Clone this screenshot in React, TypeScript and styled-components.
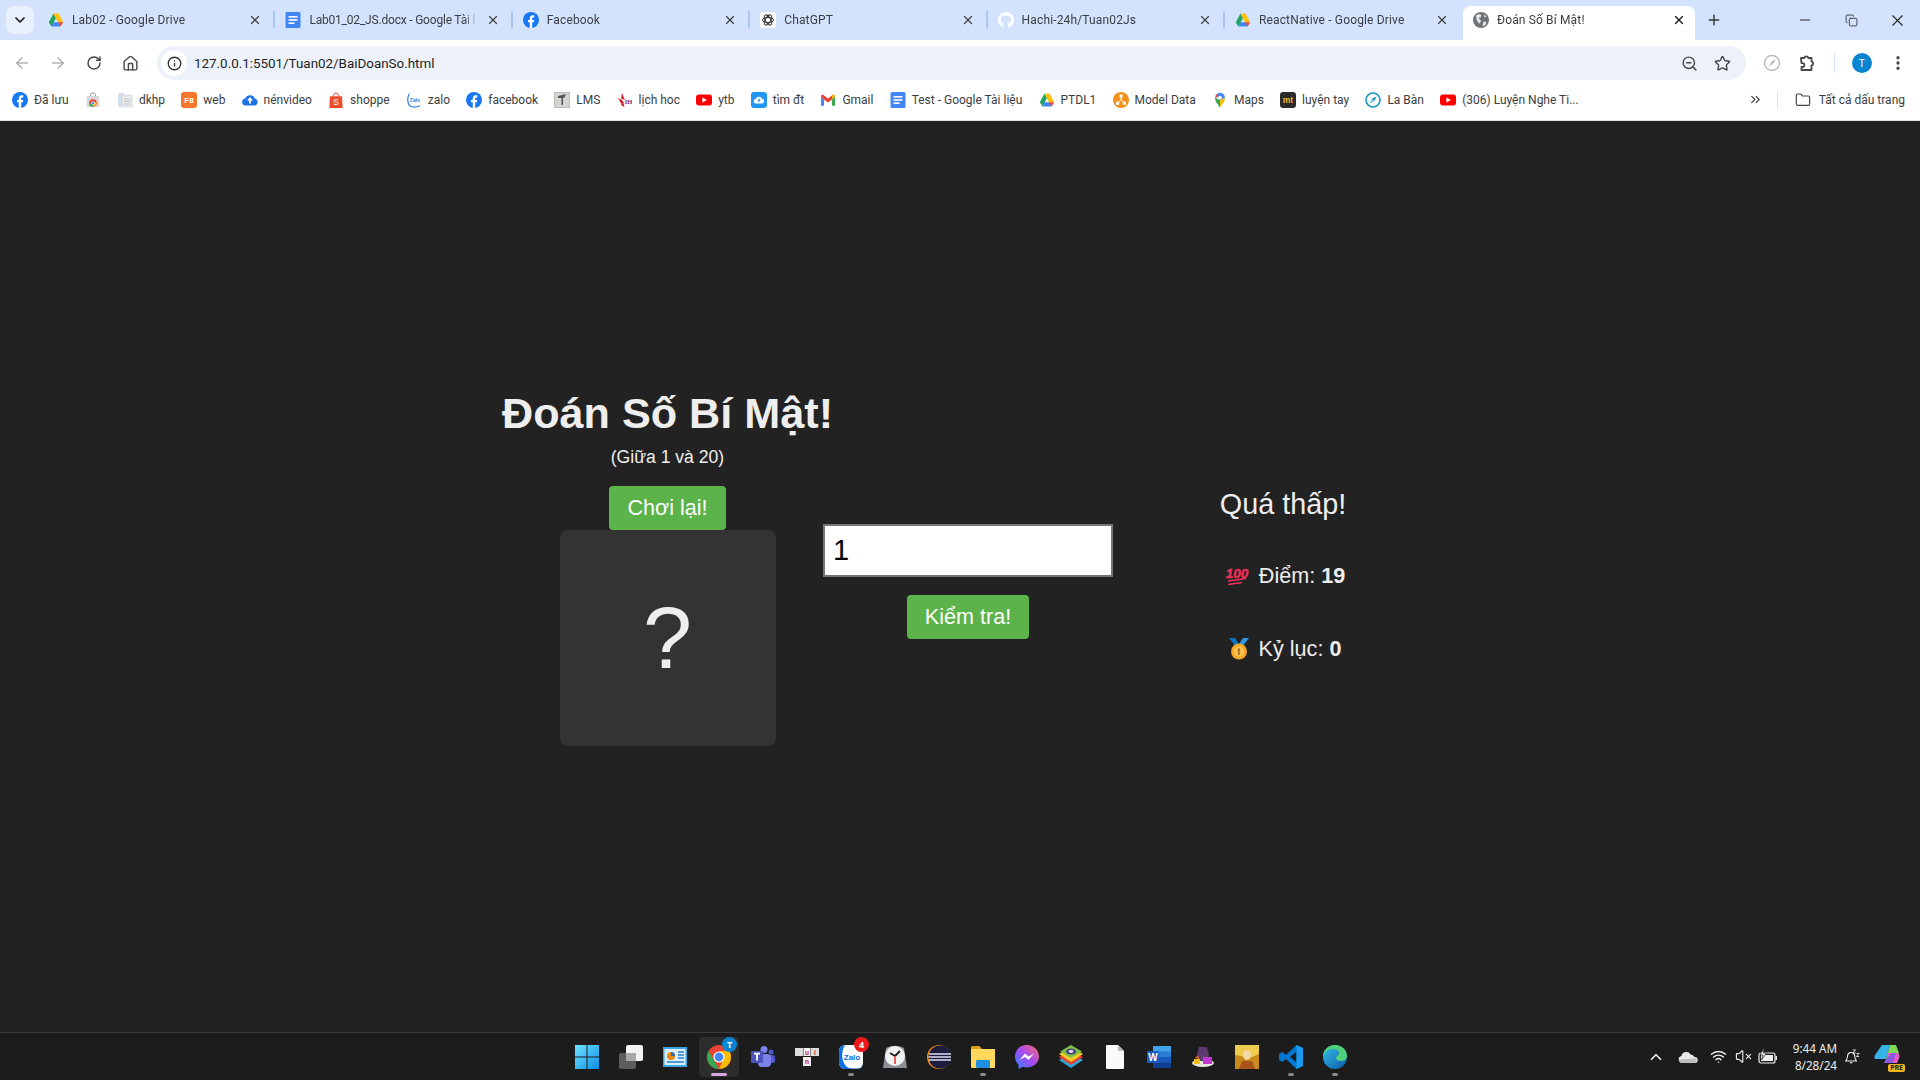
import React from 'react';
import styled, { createGlobalStyle } from 'styled-components';
import {
    ArrowLeft, ArrowRight, RotateCw, House, Info, ZoomOut, Star, EllipsisVertical,
    X, Plus, Minus, Copy, ChevronDown, ChevronsRight, ChevronUp, Folder, Wifi, VolumeX,
} from 'lucide-react';

const GlobalStyle = createGlobalStyle`
    html, body {
        margin: 0;
        padding: 0;
        height: 1080px;
        overflow: hidden;
        background: #222;
    }
    * { box-sizing: border-box; }
`;

// favicons and taskbar logos
const Drive = () => (
    <svg width="16" height="16" viewBox="0 0 16 16">
        <polygon points="5.4,1.5 8,6 3.4,14.5 0.8,10.2" fill="#1fa463" />
        <polygon points="5.4,1.5 10.6,1.5 15.2,10.2 10,10.2" fill="#ffc107" />
        <polygon points="5.4,10.2 10.4,10.2 12.6,14.5 3.4,14.5" fill="#4285f4" />
        <polygon points="10,10.2 15.2,10.2 12.6,14.5" fill="#ea4335" />
    </svg>
);
const Doc = () => (
    <svg width="16" height="16" viewBox="0 0 16 16">
        <rect x="0.5" y="0" width="15" height="16" rx="1.5" fill="#4285f4" />
        <rect x="3.5" y="4" width="9" height="1.6" fill="#fff" />
        <rect x="3.5" y="7.2" width="9" height="1.6" fill="#fff" />
        <rect x="3.5" y="10.4" width="6" height="1.6" fill="#fff" />
    </svg>
);
const Facebook = () => (
    <svg width="16" height="16" viewBox="0 0 16 16">
        <circle cx="8" cy="8" r="8" fill="#1877f2" />
        <path d="M6.8 16V10.3H5V8h1.8V6.3C6.8 4.4 7.9 3.3 9.7 3.3c.8 0 1.6.1 1.6.1v2h-.9c-.9 0-1.2.6-1.2 1.1V8h2l-.3 2.3H9.2V16z" fill="#fff" />
    </svg>
);
const Gpt = () => (
    <svg width="16" height="16" viewBox="0 0 16 16">
        <rect width="16" height="16" rx="3" fill="#fff" />
        <g fill="none" stroke="#333" strokeWidth="1">
            <ellipse cx="8" cy="8" rx="5.6" ry="2.6" />
            <ellipse cx="8" cy="8" rx="5.6" ry="2.6" transform="rotate(60 8 8)" />
            <ellipse cx="8" cy="8" rx="5.6" ry="2.6" transform="rotate(120 8 8)" />
        </g>
    </svg>
);
const Github = () => (
    <svg width="16" height="16" viewBox="0 0 16 16">
        <path fill="#fff" d="M8 0C3.6 0 0 3.6 0 8c0 3.5 2.3 6.5 5.5 7.6.4.1.5-.2.5-.4v-1.4c-2.2.5-2.7-1-2.7-1-.4-.9-.9-1.2-.9-1.2-.7-.5.1-.5.1-.5.8.1 1.2.8 1.2.8.7 1.2 1.9.9 2.3.7.1-.5.3-.9.5-1.1-1.8-.2-3.6-.9-3.6-4 0-.9.3-1.6.8-2.1-.1-.2-.4-1 .1-2.1 0 0 .7-.2 2.2.8.6-.2 1.3-.3 2-.3s1.4.1 2 .3c1.5-1 2.2-.8 2.2-.8.4 1.1.2 1.9.1 2.1.5.6.8 1.3.8 2.1 0 3.1-1.9 3.7-3.7 3.9.3.3.6.8.6 1.5v2.2c0 .2.1.5.6.4C13.7 14.5 16 11.5 16 8c0-4.4-3.6-8-8-8z" />
    </svg>
);
const Globe = () => (
    <svg width="16" height="16" viewBox="0 0 16 16">
        <circle cx="8" cy="8" r="8" fill="#6f7479" />
        <path d="M3 3.5l3-1.5 2.5 1-1 2.5-2 .5 2.5 2.5-1 3-1.5-.5L3.5 7.5zM10.5 9.5l3 .5-1.5 3.5-2.5 .5z M11 2.5l2.5 2-2 1z" fill="#e4e7ea" />
    </svg>
);
const Store = () => (
    <svg width="16" height="16" viewBox="0 0 16 16">
        <path d="M5.5 4V2.6C5.5 1.6 6.4 1 8 1s2.5.6 2.5 1.6V4" fill="none" stroke="#999" />
        <path d="M2 4h12l.6 11H1.4z" fill="#d8d8d8" />
        <circle cx="8" cy="11" r="3.8" fill="#ea4335" />
        <path d="M4.4 11.5A3.8 3.8 0 0 0 8 14.8l1.5-3z" fill="#34a853" />
        <path d="M8 14.8a3.8 3.8 0 0 0 3.6-4.6H8z" fill="#fbbc05" />
        <circle cx="8" cy="11" r="1.6" fill="#4285f4" stroke="#fff" strokeWidth=".6" />
    </svg>
);
const Page = () => (
    <svg width="16" height="16" viewBox="0 0 16 16">
        <rect x="1" y="1" width="6" height="14" fill="#cfe0ef" />
        <rect x="5" y="3" width="10" height="12" fill="#e7e9ec" stroke="#c9ced3" strokeWidth=".6" />
        <path d="M7 7h6M7 9.5h6M7 12h6" stroke="#c2c8ce" />
    </svg>
);
const F8 = () => (
    <svg width="16" height="16" viewBox="0 0 16 16">
        <rect width="16" height="16" rx="3" fill="#f6762a" />
        <text x="8" y="11" textAnchor="middle" fontFamily="Liberation Sans" fontWeight="700" fontSize="8" fill="#fff">F8</text>
    </svg>
);
const CloudUp = ({ color = '#1a73e8' }: { color?: string }) => (
    <svg width="16" height="16" viewBox="0 0 16 16">
        <path d="M4 13.5a3.5 3.5 0 0 1-.6-7A5 5 0 0 1 12.8 6.6 3.5 3.5 0 0 1 12.5 13.5z" fill={color} />
        <path d="M8 5l3 3.4H9v3H7v-3H5z" fill="#fff" />
    </svg>
);
const Shopee = () => (
    <svg width="16" height="16" viewBox="0 0 16 16">
        <path d="M5.2 4.5C5.2 2.4 6.4 1 8 1s2.8 1.4 2.8 3.5" fill="none" stroke="#ee4d2d" />
        <path d="M2 4.2h12l.7 11.8H1.3z" fill="#ee4d2d" />
        <text x="8" y="13" textAnchor="middle" fontFamily="Liberation Sans" fontSize="8.5" fill="#fff">S</text>
    </svg>
);
const ZaloBook = () => (
    <svg width="16" height="16" viewBox="0 0 16 16">
        <path d="M3.5 1.5C1 5 1 11 4 14c3 1.4 7 1.2 10-.2" fill="none" stroke="#2f7de1" strokeWidth="1.2" />
        <text x="9" y="9.6" textAnchor="middle" fontFamily="Liberation Sans" fontWeight="700" fontSize="5" fill="#2f7de1">Zalo</text>
    </svg>
);
const Lms = () => (
    <svg width="16" height="16" viewBox="0 0 16 16">
        <rect width="16" height="16" fill="#d4d4d2" stroke="#a9a9a9" />
        <path d="M4 4l8-2-1.5 3.5-1.5.5V13H7.5V6L4 6z" fill="#555" />
    </svg>
);
const Lotus = () => (
    <svg width="16" height="16" viewBox="0 0 16 16">
        <path d="M5 1l1.6 4L8 8 4 6.5zM1 6l4 2 2 3-3 .5zM6 9l1.5 6L4 13z" fill="#d6202a" />
        <text x="11.5" y="12" textAnchor="middle" fontFamily="Liberation Serif" fontWeight="700" fontSize="6.5" fill="#7c2b6f">IH</text>
    </svg>
);
const Youtube = () => (
    <svg width="16" height="16" viewBox="0 0 16 16">
        <rect y="2.5" width="16" height="11" rx="3" fill="#f00" />
        <polygon points="6.4,5.4 11,8 6.4,10.6" fill="#fff" />
    </svg>
);
const CloudTile = () => (
    <svg width="16" height="16" viewBox="0 0 16 16">
        <rect width="16" height="16" rx="3" fill="#2196f3" />
        <path d="M5 11.5a2.2 2.2 0 0 1-.2-4.4 3.3 3.3 0 0 1 6.3 0A2.2 2.2 0 0 1 11 11.5z" fill="#fff" />
        <path d="M8 6.6l1.6 2H8.6v1.4H7.4V8.6H6.4z" fill="#2196f3" />
    </svg>
);
const Gmail = () => (
    <svg width="16" height="16" viewBox="0 0 16 16">
        <path d="M1 4.5v9.2h3V7.4z" fill="#4285f4" />
        <path d="M12 7.4v6.3h3V4.5z" fill="#34a853" />
        <path d="M1 4.5C1 3 2.6 2.4 3.6 3.2L8 6.6l4.4-3.4C13.4 2.4 15 3 15 4.5L12 7.4 8 10.4 4 7.4z" fill="#ea4335" />
        <path d="M12 7.4V3.9l.4-.7C13.4 2.4 15 3 15 4.5z" fill="#fbbc05" />
    </svg>
);
const ModelData = () => (
    <svg width="16" height="16" viewBox="0 0 16 16">
        <circle cx="8" cy="8" r="8" fill="#f39019" />
        <path d="M8 4v3.5M8 7.5L4.8 11M8 7.5l3.2 3.5" stroke="#fff" />
        <rect x="6.4" y="2.6" width="3.2" height="3" fill="#fff" />
        <rect x="3" y="9.8" width="3.2" height="3" fill="#fff" />
        <rect x="9.8" y="9.8" width="3.2" height="3" fill="#fff" />
    </svg>
);
const Maps = () => (
    <svg width="16" height="16" viewBox="0 0 16 16">
        <path d="M8 16C6.6 12.4 3 10.4 3 5.6L8 8z" fill="#34a853" />
        <path d="M8 16c1.4-3.6 5-5.6 5-10.4L8 8z" fill="#fbbc05" />
        <path d="M3 5.6A5 5 0 0 1 6 1.2L8 5z" fill="#ea4335" />
        <path d="M6 1.2A5 5 0 0 1 13 5.6L8 8 6 5z" fill="#4285f4" />
        <circle cx="8" cy="5.6" r="1.8" fill="#fff" />
    </svg>
);
const Mt = () => (
    <svg width="16" height="16" viewBox="0 0 16 16">
        <rect width="16" height="16" rx="3" fill="#2a2a2a" />
        <text x="8" y="11" textAnchor="middle" fontFamily="Liberation Sans" fontWeight="700" fontSize="8.5" fill="#f2b71d">mt</text>
    </svg>
);
const Compass = () => (
    <svg width="16" height="16" viewBox="0 0 16 16">
        <circle cx="8" cy="8" r="7" fill="#fff" stroke="#1297c9" strokeWidth="1.6" />
        <polygon points="11.8,4.2 9.2,9.2 6.8,6.8" fill="#1297c9" />
        <polygon points="4.2,11.8 9.2,9.2 6.8,6.8" fill="#7ec8e3" />
    </svg>
);

const GrayCompass = () => (
    <svg width="18" height="18" viewBox="0 0 18 18">
        <circle cx="9" cy="9" r="7.5" fill="#fff" stroke="#b8bbbf" strokeWidth="1.4" />
        <polygon points="12.6,5.4 10,10 8,8" fill="#a8abb0" />
        <polygon points="5.4,12.6 10,10 8,8" fill="#c8cacd" />
    </svg>
);
const ExtensionPuzzle = () => (
    <svg width="18" height="18" viewBox="0 0 18 18" fill="none" stroke="#474747" strokeWidth="1.8" strokeLinejoin="round">
        <path d="M3 4h3.2a2.1 2.1 0 0 1 4.1 0h3.2v3.4a2.1 2.1 0 0 1 0 4.1V16H3.5v-3h1a1.9 1.9 0 0 0 0-3.8h-1z" />
    </svg>
);

const Hundred = () => (
    <svg width="24" height="24" viewBox="0 0 24 24">
        <text x="12" y="14" textAnchor="middle" fontFamily="Liberation Sans" fontWeight="700" fontStyle="italic" fontSize="13.5" fill="#f0325f" stroke="#f0325f" strokeWidth=".4">100</text>
        <path d="M3 17l18-2.5M3 20.5l14-2" stroke="#f0325f" strokeWidth="1.6" />
    </svg>
);
const Medal = () => (
    <svg width="20" height="24" viewBox="0 0 20 24">
        <path d="M0 1h6l4 6-3 3z" fill="#0d73c4" />
        <path d="M20 1h-6l-4 6 3 3z" fill="#2f95e0" />
        <circle cx="10" cy="14.5" r="8" fill="#f5a623" />
        <circle cx="10" cy="14.5" r="5.4" fill="#fbc04d" />
        <path d="M9 12l1.6-1v7H9.2v-4.6l-.8.4z" fill="#8a5a12" />
    </svg>
);

// taskbar
const StartLogo = () => (
    <svg width="24" height="24" viewBox="0 0 24 24">
        <defs>
            <linearGradient id="startGrad" x1="0" y1="0" x2="1" y2="1">
                <stop offset="0" stopColor="#6fe3ff" />
                <stop offset="1" stopColor="#0f8fe6" />
            </linearGradient>
        </defs>
        <path d="M0 0h11.5v11.5H0zM12.5 0H24v11.5H12.5zM0 12.5h11.5V24H0zM12.5 12.5H24V24H12.5z" fill="url(#startGrad)" />
    </svg>
);
const TaskView = () => (
    <svg width="24" height="24" viewBox="0 0 24 24">
        <rect x="0" y="8" width="17" height="16" rx="2" fill="#5d5d5d" />
        <rect x="7" y="0" width="17" height="16" rx="2" fill="#f3f3f3" />
        <rect x="7" y="8" width="10" height="8" fill="#a8a8a8" />
    </svg>
);
const Widgets = () => (
    <svg width="24" height="20" viewBox="0 0 24 20">
        <rect width="24" height="20" fill="#3ba7e4" />
        <rect x="1.5" y="2" width="21" height="16" fill="#d8effb" />
        <circle cx="8" cy="9" r="4" fill="#e88a1a" />
        <path d="M8 9V5a4 4 0 0 1 4 4z" fill="#2a6fb5" />
        <path d="M15 5h6M15 8h6M15 11h6M4 15h17" stroke="#2a7fc0" strokeWidth="1.4" />
    </svg>
);
const Chrome = () => (
    <svg width="24" height="24" viewBox="0 0 24 24">
        <circle cx="12" cy="12" r="12" fill="#ea4335" />
        <path d="M12 24A12 12 0 0 1 1.6 6l6 10.4z" fill="#34a853" />
        <path d="M12 24a12 12 0 0 0 10.4-18H12l4.4 8z" fill="#fbbc05" />
        <circle cx="12" cy="12" r="5.6" fill="#fff" />
        <circle cx="12" cy="12" r="4.4" fill="#4285f4" />
    </svg>
);
const Teams = () => (
    <svg width="24" height="24" viewBox="0 0 24 24">
        <circle cx="13" cy="4.5" r="3.5" fill="#7b83eb" />
        <circle cx="20" cy="7" r="2.5" fill="#5059c9" />
        <rect x="17" y="10" width="7" height="8" rx="2.5" fill="#5059c9" />
        <rect x="7" y="9" width="13" height="13" rx="4" fill="#7b83eb" />
        <rect x="0" y="6" width="12" height="12" rx="1.2" fill="#4b53bc" />
        <path d="M3 8.6h6M6 8.6v7" stroke="#fff" strokeWidth="1.8" />
    </svg>
);
const Unikey = () => (
    <svg width="24" height="20" viewBox="0 0 24 20" fontFamily="Liberation Sans" fontWeight="700" fontSize="6.5" textAnchor="middle">
        <rect x="0" y="1" width="8" height="8" fill="#ddd" />
        <rect x="8.5" y="1" width="7" height="8" fill="#f5f5f5" />
        <rect x="16" y="1" width="8" height="8" fill="#ddd" />
        <rect x="8" y="10" width="8" height="9" fill="#eee" />
        <text x="12" y="7.5" fill="#c22">u</text>
        <text x="20" y="7.5" fill="#c22">i</text>
        <text x="12" y="17" fill="#c22">n</text>
    </svg>
);
const Zalo = () => (
    <svg width="24" height="24" viewBox="0 0 24 24">
        <rect width="24" height="24" rx="6" fill="#fff" />
        <path d="M6 0C0 1 0 4 0 8v10c0 3 3 6 6 6h12c2 0 4-.6 6-2-6 2-12 2-16 0-6-5-6-16-2-22z" fill="#0a6fe8" />
        <text x="13" y="15" textAnchor="middle" fontFamily="Liberation Sans" fontWeight="700" fontSize="8" fill="#0a6fe8">Zalo</text>
    </svg>
);
const Clock = () => (
    <svg width="24" height="24" viewBox="0 0 24 24">
        <path d="M3 3c6-3 12-3 18 0l3 20H0z" fill="#8a9297" />
        <circle cx="12" cy="11" r="10" fill="#f1f1f1" />
        <path d="M12 11l5-5" stroke="#222" strokeWidth="2" />
        <path d="M12 11l-5-3" stroke="#222" strokeWidth="2" />
        <path d="M12 11v8" stroke="#d33" strokeWidth="1.5" />
    </svg>
);
const Eclipse = () => (
    <svg width="24" height="24" viewBox="0 0 24 24">
        <circle cx="12" cy="12" r="12" fill="#f7941e" />
        <circle cx="13" cy="12" r="11.5" fill="#1d1c3d" />
        <path d="M2 9h22M1.5 12h23M2 15h22" stroke="#dcdcf2" strokeWidth="1.6" />
    </svg>
);
const Explorer = () => (
    <svg width="24" height="24" viewBox="0 0 24 24">
        <path d="M0 2.5A1.5 1.5 0 0 1 1.5 1h7L11 4H0z" fill="#d9a016" />
        <path d="M0 4h24v18a1 1 0 0 1-1 1H1a1 1 0 0 1-1-1z" fill="#ffd85c" />
        <rect x="5" y="15" width="14" height="8" rx="1.5" fill="#1e90e0" />
    </svg>
);
const Messenger = () => (
    <svg width="24" height="24" viewBox="0 0 24 24">
        <defs>
            <linearGradient id="msgGrad" x1="0" y1="1" x2="1" y2="0">
                <stop offset="0" stopColor="#2f86ff" />
                <stop offset=".5" stopColor="#a24bf5" />
                <stop offset="1" stopColor="#ff6a6a" />
            </linearGradient>
        </defs>
        <path d="M12 0C5 0 0 5 0 11.5c0 3.4 1.4 6.3 3.6 8.3V24l4-2.2c1.4.4 2.8.6 4.4.6 7 0 12-5 12-10.9S19 0 12 0z" fill="url(#msgGrad)" />
        <path d="M4.5 15L10 8.5l3.5 3 5.5-3-5.5 6.5-3.5-3z" fill="#fff" />
    </svg>
);
const Bluestacks = () => (
    <svg width="24" height="24" viewBox="0 0 24 24">
        <path d="M0 15l12-7 12 7-12 8z" fill="#2aa6e0" />
        <path d="M0 12l12-7 12 7-12 8z" fill="#e8432e" />
        <path d="M0 9l12-7 12 7-12 8z" fill="#f7c926" />
        <path d="M1 6.5L12 0l11 6.5L12 13z" fill="#7dc242" />
        <ellipse cx="12" cy="6.5" rx="5" ry="3" fill="#4a3b8f" />
        <ellipse cx="12" cy="6.5" rx="2.4" ry="1.4" fill="#e0e8f0" />
    </svg>
);
const FileIcon = () => (
    <svg width="18" height="24" viewBox="0 0 18 24">
        <path d="M1 0h11l6 6v17a1 1 0 0 1-1 1H1a1 1 0 0 1-1-1V1a1 1 0 0 1 1-1z" fill="#fafafa" />
        <path d="M12 0l6 6h-6z" fill="#bbb" />
    </svg>
);
const Word = () => (
    <svg width="24" height="22" viewBox="0 0 24 22">
        <rect x="6" y="0" width="18" height="22" rx="1" fill="#2b7cd3" />
        <rect x="6" y="0" width="18" height="5.5" fill="#41a5ee" />
        <rect x="6" y="11" width="18" height="5.5" fill="#185abd" />
        <rect x="6" y="16.5" width="18" height="5.5" fill="#103f91" />
        <rect x="0" y="5" width="12" height="12" rx="1" fill="#185abd" />
        <text x="6" y="14.5" textAnchor="middle" fontFamily="Liberation Sans" fontWeight="700" fontSize="10" fill="#fff">W</text>
    </svg>
);
const GameIcon = () => (
    <svg width="24" height="24" viewBox="0 0 24 24">
        <ellipse cx="12" cy="18" rx="11" ry="4" fill="#e9e4da" />
        <path d="M8 2h8l2 8-2 6H8l-2-6z" fill="#5b3a6e" />
        <rect x="12" y="12" width="9" height="7" fill="#c23ad6" />
        <rect x="3" y="14" width="6" height="5" fill="#f0c020" />
        <path d="M4 13l3-3 1 4z" fill="#e8641e" />
    </svg>
);
const Dbz = () => (
    <svg width="24" height="24" viewBox="0 0 24 24">
        <rect width="24" height="24" fill="#c98a1c" />
        <path d="M0 0h24v9L17 12l-5 1-6-2-6-1z" fill="#eccb4d" />
        <ellipse cx="12" cy="10" rx="4" ry="5" fill="#f4d9a8" />
        <path d="M4 24l3-8h10l3 8z" fill="#a8521c" />
    </svg>
);
const VsCode = () => (
    <svg width="24" height="24" viewBox="0 0 24 24">
        <path d="M17.5 0L24 3v18l-6.5 3L7 14l-4 3-3-2V9l3-2 4 3z" fill="#0078d4" />
        <path d="M17.5 6.5L11 12l6.5 5.5z" fill="#1c1c1c" />
        <path d="M17.5 0L24 3v18l-6.5 3z" fill="#1a9bf0" />
    </svg>
);
const Edge = () => (
    <svg width="24" height="24" viewBox="0 0 24 24">
        <defs>
            <linearGradient id="edgeGrad" x1="0" y1="0" x2="1" y2="1">
                <stop offset="0" stopColor="#35c1f1" />
                <stop offset="1" stopColor="#0c59a4" />
            </linearGradient>
        </defs>
        <circle cx="12" cy="12" r="12" fill="url(#edgeGrad)" />
        <path d="M12 0c7 0 12 5 12 11 0 3-3 5-6 5s-5-1-5-3c0-2 3-2 3-5S13 4 9 4 1 8 0 12C0 5 5 0 12 0z" fill="#4fd07a" />
    </svg>
);
const Copilot = () => (
    <svg width="28" height="24" viewBox="0 0 28 24">
        <path d="M8 0h8l-4 14H2C0 14 0 12 1 10z" fill="#36b3e8" />
        <path d="M16 0l6 0 3 8-9 10-4-4z" fill="#7ed957" />
        <path d="M14 8h8c3 0 4 2 3 5l-2 5H12z" fill="#e85bc2" />
        <path d="M12 14l6-6 4 0-3 10H10z" fill="#8a5be8" />
    </svg>
);
const OneDrive = () => (
    <svg width="20" height="12" viewBox="0 0 20 12">
        <path d="M4 12A3.5 3.5 0 0 1 3.4 5.1 5 5 0 0 1 12.6 3.4 4 4 0 0 1 16.4 6 3 3 0 0 1 17 12z" fill="#e8e8e8" />
        <path d="M4 12A3 3 0 0 1 1 8.5L18 7.5A3 3 0 0 1 17 12z" fill="#bdbdbd" />
    </svg>
);
const Battery = () => (
    <svg width="20" height="18" viewBox="0 0 20 18" fill="none">
        <rect x="1" y="5" width="16" height="10" rx="2" stroke="#eee" strokeWidth="1.2" />
        <rect x="3" y="7" width="12" height="6" fill="#eee" />
        <rect x="17.5" y="8" width="1.5" height="4" fill="#eee" />
        <path d="M6 0L2 7h3l-1.5 5L8.5 5H5.5z" fill="#eee" stroke="#1c1c1c" strokeWidth=".7" />
    </svg>
);
const SnoozeBell = () => (
    <svg width="18" height="18" viewBox="0 0 18 18" fill="none" stroke="#eee" strokeWidth="1.2">
        <path d="M8 4a4 4 0 0 0-4 4c0 3-1.5 4.5-2 5.5h12c-.5-1-2-2.500-2-5.500a4 4 0 0 0-4-4z" />
        <path d="M6.500 15.500h3" />
        <path d="M10 1h3l-3 3.500h3M14 5h3l-3 3.500h3" strokeWidth="1" />
    </svg>
);

const tabs = [
    { title: 'Lab02 - Google Drive', icon: <Drive /> },
    { title: 'Lab01_02_JS.docx - Google Tài l', icon: <Doc />, tight: true },
    { title: 'Facebook', icon: <Facebook /> },
    { title: 'ChatGPT', icon: <Gpt /> },
    { title: 'Hachi-24h/Tuan02Js', icon: <Github /> },
    { title: 'ReactNative - Google Drive', icon: <Drive /> },
];

const bookmarks = [
    { label: 'Đã lưu', icon: <Facebook /> },
    { label: '', icon: <Store /> },
    { label: 'dkhp', icon: <Page /> },
    { label: 'web', icon: <F8 /> },
    { label: 'nénvideo', icon: <CloudUp /> },
    { label: 'shoppe', icon: <Shopee /> },
    { label: 'zalo', icon: <ZaloBook /> },
    { label: 'facebook', icon: <Facebook /> },
    { label: 'LMS', icon: <Lms /> },
    { label: 'lịch hoc', icon: <Lotus /> },
    { label: 'ytb', icon: <Youtube /> },
    { label: 'tìm đt', icon: <CloudTile /> },
    { label: 'Gmail', icon: <Gmail /> },
    { label: 'Test - Google Tài liệu', icon: <Doc /> },
    { label: 'PTDL1', icon: <Drive /> },
    { label: 'Model Data', icon: <ModelData /> },
    { label: 'Maps', icon: <Maps /> },
    { label: 'luyện tay', icon: <Mt /> },
    { label: 'La Bàn', icon: <Compass /> },
    { label: '(306) Luyện Nghe Ti...', icon: <Youtube /> },
];

const taskApps = [
    { icon: <StartLogo /> },
    { icon: <TaskView /> },
    { icon: <Widgets /> },
    { icon: <Chrome />, active: true, badge: 'T', badgeBlue: true },
    { icon: <Teams /> },
    { icon: <Unikey /> },
    { icon: <Zalo />, badge: '4', running: true },
    { icon: <Clock /> },
    { icon: <Eclipse /> },
    { icon: <Explorer />, running: true },
    { icon: <Messenger /> },
    { icon: <Bluestacks /> },
    { icon: <FileIcon /> },
    { icon: <Word /> },
    { icon: <GameIcon /> },
    { icon: <Dbz /> },
    { icon: <VsCode />, running: true },
    { icon: <Edge />, running: true },
];

const App: React.FC = () => {
    return (
        <Screen>
            <GlobalStyle />
            <TabStrip>
                <TabSearch><ChevronDown size={16} strokeWidth={2.6} color="#1f1f1f" /></TabSearch>
                {tabs.map((tab) => (
                    <Tab key={tab.title}>
                        <TabIcon>{tab.icon}</TabIcon>
                        <TabTitle $tight={tab.tight}>{tab.title}</TabTitle>
                        <X size={14} strokeWidth={2.2} color="#444" />
                    </Tab>
                ))}
                <ActiveTab>
                    <TabIcon><Globe /></TabIcon>
                    <TabTitle>Đoán Số Bí Mật!</TabTitle>
                    <X size={14} strokeWidth={2.4} color="#222" />
                </ActiveTab>
                <NewTab><Plus size={16} strokeWidth={2.2} color="#333" /></NewTab>
                <WindowControls>
                    <WindowButton><Minus size={16} strokeWidth={1.5} color="#222" /></WindowButton>
                    <WindowButton><Copy size={13} strokeWidth={1.5} color="#222" /></WindowButton>
                    <WindowButton><X size={19} strokeWidth={1.4} color="#222" /></WindowButton>
                </WindowControls>
            </TabStrip>

            <Toolbar>
                <NavButton><ArrowLeft size={18} color="#b0b2b5" /></NavButton>
                <NavButton><ArrowRight size={18} color="#b0b2b5" /></NavButton>
                <NavButton><RotateCw size={16} strokeWidth={2.2} color="#474747" /></NavButton>
                <NavButton><House size={17} strokeWidth={2} color="#474747" /></NavButton>
                <Omnibox>
                    <SiteInfo><Info size={15} strokeWidth={2.2} color="#333" /></SiteInfo>
                    <Url>127.0.0.1:5501/Tuan02/BaiDoanSo.html</Url>
                    <OmniActions>
                        <ZoomOut size={17} strokeWidth={2} color="#474747" />
                        <Star size={17} strokeWidth={2} color="#474747" />
                    </OmniActions>
                </Omnibox>
                <ToolActions>
                    <GrayCompass />
                    <ExtensionPuzzle />
                    <ToolDivider />
                    <Avatar>T</Avatar>
                    <EllipsisVertical size={18} strokeWidth={2.4} color="#474747" />
                </ToolActions>
            </Toolbar>

            <BookmarkBar>
                <BookmarkList>
                    {bookmarks.map((item, i) => (
                        <Bookmark key={i}>
                            {item.icon}
                            {item.label && <BookmarkLabel>{item.label}</BookmarkLabel>}
                        </Bookmark>
                    ))}
                </BookmarkList>
                <ChevronsRight size={15} strokeWidth={2} color="#474747" />
                <BarDivider />
                <AllBookmarks>
                    <Folder size={16} strokeWidth={1.8} color="#474747" />
                    <BookmarkLabel>Tất cả dấu trang</BookmarkLabel>
                </AllBookmarks>
            </BookmarkBar>

            <Main>
                <GameColumn>
                    <Title>Đoán Số Bí Mật!</Title>
                    <Range>(Giữa 1 và 20)</Range>
                    <GreenButton $top={19}>Chơi lại!</GreenButton>
                    <SecretCard>?</SecretCard>
                </GameColumn>
                <GuessColumn>
                    <GuessInput type="text" defaultValue="1" />
                    <GreenButton $top={18}>Kiểm tra!</GreenButton>
                </GuessColumn>
                <ResultColumn>
                    <Message>Quá thấp!</Message>
                    <Stat>
                        <Hundred />
                        <span>Điểm: <strong>19</strong></span>
                    </Stat>
                    <Stat>
                        <Medal />
                        <span>Kỷ lục: <strong>0</strong></span>
                    </Stat>
                </ResultColumn>
            </Main>

            <Taskbar>
                <span />
                <TaskApps>
                    {taskApps.map((app, i) => (
                        <TaskApp key={i} $active={app.active}>
                            {app.icon}
                            {app.badge && <TaskBadge $blue={app.badgeBlue}>{app.badge}</TaskBadge>}
                            {app.active && <ActiveMark />}
                            {app.running && <RunningMark />}
                        </TaskApp>
                    ))}
                </TaskApps>
                <Tray>
                    <TraySlot $width={32}><ChevronUp size={18} strokeWidth={2.2} color="#eee" /></TraySlot>
                    <TraySlot $width={32}><OneDrive /></TraySlot>
                    <TraySlot $width={28}><Wifi size={17} strokeWidth={2} color="#eee" /></TraySlot>
                    <TraySlot $width={23}><VolumeX size={17} strokeWidth={1.6} color="#eee" /></TraySlot>
                    <TraySlot $width={26}><Battery /></TraySlot>
                    <Clockbox>
                        <div>9:44 AM</div>
                        <div>8/28/24</div>
                    </Clockbox>
                    <TraySlot $width={16}><SnoozeBell /></TraySlot>
                    <TraySlot $width={56}>
                        <CopilotBox>
                            <Copilot />
                            <PreBadge>PRE</PreBadge>
                        </CopilotBox>
                    </TraySlot>
                </Tray>
            </Taskbar>
        </Screen>
    );
};

export default App;

// Styled-components

const Screen = styled.div`
    display: flex;
    flex-direction: column;
    width: 1920px;
    height: 1080px;
    background: #222;
    font-family: 'Liberation Sans', Arial, sans-serif;
`;

const TabStrip = styled.div`
    display: flex;
    align-items: flex-end;
    height: 40px;
    background: #d3e3fd;
    padding-left: 6px;
    font-family: Roboto, 'Noto Sans', sans-serif;
`;

const TabSearch = styled.div`
    display: flex;
    align-items: center;
    justify-content: center;
    width: 28px;
    height: 28px;
    margin: 0 4px 6px 0;
    border-radius: 8px;
    background: #e9f0fc;
`;

const Tab = styled.div`
    display: flex;
    align-items: center;
    width: 237.4px;
    height: 34px;
    padding: 0 11px 6px 10px;
    gap: 8px;
    border-right: 2px solid #a9c5f0;
    &:nth-child(7) { border-right: none; width: 238px; padding-right: 14px; }
    border-image: linear-gradient(to bottom, transparent 6px, #a9c5f0 6px, #a9c5f0 22px, transparent 22px) 1;
`;

const ActiveTab = styled(Tab)`
    width: 232px;
    height: 34px;
    padding-right: 9px;
    background: #fff;
    border-radius: 8px 8px 0 0;
    border: none;
    color: #1f1f1f;
`;

const TabIcon = styled.div`
    display: flex;
    flex: none;
`;

const TabTitle = styled.div<{ $tight?: boolean }>`
    flex: 1;
    min-width: 0;
    overflow: hidden;
    white-space: nowrap;
    font-size: 12px;
    letter-spacing: ${(p) => (p.$tight ? '-0.2px' : '0.15px')};
    color: #3a3d42;
    mask-image: linear-gradient(to right, #000 calc(100% - 14px), transparent);
`;

const NewTab = styled.div`
    display: flex;
    align-items: center;
    justify-content: center;
    width: 28px;
    height: 28px;
    margin: 0 0 6px 5px;
`;

const WindowControls = styled.div`
    display: flex;
    margin-left: auto;
    height: 40px;
    align-items: center;
`;

const WindowButton = styled.div`
    display: flex;
    align-items: center;
    justify-content: center;
    width: 46px;
`;

const Toolbar = styled.div`
    display: flex;
    align-items: center;
    height: 40px;
    background: #fff;
    padding-left: 4px;
    font-family: Roboto, 'Noto Sans', sans-serif;
`;

const NavButton = styled.div`
    display: flex;
    align-items: center;
    justify-content: center;
    width: 36px;
    height: 34px;
    margin-top: 6px;
`;

const Omnibox = styled.div`
    display: flex;
    align-items: center;
    width: 1589px;
    height: 34px;
    margin: 6px 0 0 9px;
    border-radius: 17px;
    background: #ecf1fa;
    padding: 0 15px 0 4px;
`;

const SiteInfo = styled.div`
    display: flex;
    align-items: center;
    justify-content: center;
    width: 26px;
    height: 26px;
    border-radius: 50%;
    background: #fff;
`;

const Url = styled.div`
    flex: 1;
    margin-left: 7px;
    font-size: 13.4px;
    color: #1f1f1f;
`;

const OmniActions = styled.div`
    display: flex;
    align-items: center;
    gap: 16px;
`;

const ToolActions = styled.div`
    display: flex;
    align-items: center;
    flex: 1;
    padding: 6px 13px 0 17px;
    justify-content: space-between;
`;

const ToolDivider = styled.div`
    width: 1px;
    height: 20px;
    background: #d3e3fd;
`;

const Avatar = styled.div`
    display: flex;
    align-items: center;
    justify-content: center;
    width: 20px;
    height: 20px;
    border-radius: 50%;
    background: #0a85d1;
    color: #fff;
    font-size: 10px;
`;

const BookmarkBar = styled.div`
    display: flex;
    align-items: center;
    height: 41px;
    background: #fff;
    padding: 0 15px 1px 12px;
    border-bottom: 1px solid #e3e3e3;
    font-family: Roboto, 'Noto Sans', sans-serif;
`;

const BookmarkList = styled.div`
    display: flex;
    align-items: center;
    gap: 16.2px;
    flex: 1;
`;

const Bookmark = styled.div`
    display: flex;
    align-items: center;
    gap: 6px;
    svg { flex: none; }
`;

const BookmarkLabel = styled.span`
    font-size: 12px;
    color: #3a3d42;
    white-space: nowrap;
`;

const BarDivider = styled.div`
    width: 1px;
    height: 16px;
    margin: 0 17px 0 14px;
    background: #d3e3fd;
`;

const AllBookmarks = styled.div`
    display: flex;
    align-items: center;
    gap: 8px;
`;

const Main = styled.main`
    display: flex;
    align-items: flex-start;
    flex: 1;
    min-height: 0;
    padding: 266px 0 0 512px;
    background: #222;
    color: #eee;
`;

const GameColumn = styled.div`
    display: flex;
    flex-direction: column;
    align-items: center;
    width: 311px;
    flex: none;
`;

const Title = styled.h1`
    margin: 0;
    font-size: 43.2px;
    line-height: 53px;
    font-weight: 700;
    white-space: nowrap;
    color: #eee;
`;

const Range = styled.p`
    margin: 7px 0 0;
    font-size: 17.6px;
    line-height: 20px;
`;

const GreenButton = styled.button<{ $top: number }>`
    flex: none;
    height: 44px;
    padding: 0 18px;
    margin-top: ${(p) => p.$top}px;
    border: none;
    border-radius: 4px;
    background: #5bb349;
    color: #fff;
    font-family: inherit;
    font-size: 21.6px;
`;

const SecretCard = styled.div`
    display: flex;
    align-items: center;
    justify-content: center;
    width: 216px;
    height: 216px;
    border-radius: 8px;
    background: #333;
    color: #eee;
    font-size: 88px;
`;

const GuessColumn = styled.div`
    display: flex;
    flex-direction: column;
    align-items: center;
    width: 290px;
    flex: none;
    margin-top: 137px;
`;

const GuessInput = styled.input`
    width: 290px;
    height: 53px;
    padding: 0 8px;
    border: 2px solid #767676;
    background: #fff;
    color: #000;
    font-family: inherit;
    font-size: 29px;
    outline: none;
`;

const ResultColumn = styled.div`
    display: flex;
    flex-direction: column;
    align-items: center;
    width: 340px;
    flex: none;
    margin-top: 100px;
`;

const Message = styled.div`
    font-size: 28.8px;
    line-height: 34px;
`;

const Stat = styled.div`
    display: flex;
    align-items: center;
    gap: 10px;
    height: 30px;
    margin-top: 40px;
    padding-left: 4px;
    font-size: 21.6px;
    strong { font-weight: 700; }
    &:last-child { margin-top: 43px; }
`;

const Taskbar = styled.footer`
    display: grid;
    grid-template-columns: 1fr auto 1fr;
    align-items: center;
    height: 48px;
    flex: none;
    padding-left: 2px;
    background: #1c1c1c;
    border-top: 1px solid #3a3a3a;
    font-family: 'Noto Sans', Roboto, sans-serif;
`;

const TaskApps = styled.div`
    display: flex;
    gap: 4px;
`;

const TaskApp = styled.div<{ $active?: boolean }>`
    position: relative;
    display: flex;
    align-items: center;
    justify-content: center;
    width: 40px;
    height: 40px;
    border-radius: 4px;
    background: ${(p) => (p.$active ? '#2d2d2d' : 'transparent')};
`;

const TaskBadge = styled.span<{ $blue?: boolean }>`
    position: absolute;
    top: 0;
    right: 2px;
    display: flex;
    align-items: center;
    justify-content: center;
    width: 15px;
    height: 15px;
    border-radius: 50%;
    background: ${(p) => (p.$blue ? '#0a85d1' : '#f01818')};
    color: #fff;
    font-size: 9px;
    font-weight: 700;
`;

const ActiveMark = styled.span`
    position: absolute;
    bottom: 1px;
    left: 12px;
    width: 16px;
    height: 3px;
    border-radius: 2px;
    background: #d8a6e6;
`;

const RunningMark = styled.span`
    position: absolute;
    bottom: 1px;
    left: 17px;
    width: 6px;
    height: 3px;
    border-radius: 2px;
    background: #8a8a8a;
`;

const Tray = styled.div`
    display: flex;
    align-items: center;
    justify-content: flex-end;
    padding-right: 4px;
`;

const TraySlot = styled.div<{ $width: number }>`
    display: flex;
    align-items: center;
    justify-content: center;
    width: ${(p) => p.$width}px;
    flex: none;
`;

const Clockbox = styled.div`
    width: 63px;
    padding-right: 7px;
    font-size: 11.7px;
    line-height: 17px;
    text-align: right;
    color: #eee;
`;

const CopilotBox = styled.div`
    position: relative;
    display: flex;
`;

const PreBadge = styled.span`
    position: absolute;
    right: -3px;
    bottom: -3px;
    padding: 0 2px;
    border-radius: 2px;
    background: #f2b71d;
    color: #222;
    font-size: 7px;
    line-height: 8px;
    font-weight: 700;
`;
